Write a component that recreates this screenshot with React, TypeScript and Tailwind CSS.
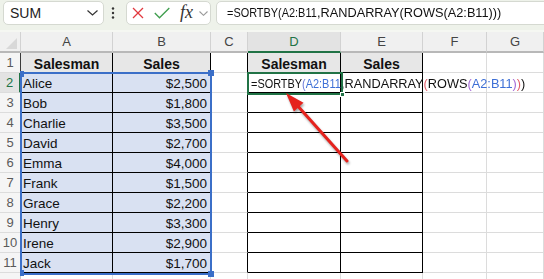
import React from "react";

const data: [string, string][] = [
  ["Alice", "$2,500"],
  ["Bob", "$1,800"],
  ["Charlie", "$3,500"],
  ["David", "$2,700"],
  ["Emma", "$4,000"],
  ["Frank", "$1,500"],
  ["Grace", "$2,200"],
  ["Henry", "$3,300"],
  ["Irene", "$2,900"],
  ["Jack", "$1,700"],
];

const colKeys = ["A", "B", "C", "D", "E", "F", "G"];

function Formula({ colored }: { colored: boolean }) {
  const blue = colored ? "text-[#3d6fd6]" : "";
  const p1 = colored ? "text-[#6a78d8]" : "";
  const p2 = colored ? "text-[#e2606c]" : "";
  const p3 = colored ? "text-[#a56ad6]" : "";
  return (
    <span className="inline-flex whitespace-nowrap text-[13px] text-[#111]">
      <span className="inline-block w-[90px] whitespace-nowrap">
        <span className="inline-block origin-left scale-x-[0.84]">
          =SORTBY<span className={p1}>(</span>
          <span className={blue}>A2:B11</span>
        </span>
      </span>
      <span className="inline-block origin-left scale-x-[0.98] whitespace-nowrap">
        ,RANDARRAY<span className={p2}>(</span>ROWS
        <span className={p3}>(</span>
        <span className={blue}>A2:B11</span>
        <span className={p3}>)</span>
        <span className={p2}>)</span>)
      </span>
    </span>
  );
}

function TopBar() {
  return (
    <>
      <div className="h-[30px] bg-[#eef2ea] flex items-start pt-px">
        <div className="ml-[3px] w-[101px] h-[24px] bg-white border border-[#d5d9d1] rounded-[5px] flex items-center justify-between pl-[6px] pr-[4px]">
          <span className="text-[14px] text-[#222]">SUM</span>
          <svg width="11" height="6" viewBox="0 0 11 6" className="mr-[1px]">
            <polyline points="0.5,0.5 5.5,5 10.5,0.5" fill="none" stroke="#333" strokeWidth="1.2" />
          </svg>
        </div>
        <div className="w-[22px] h-[24px] flex items-center justify-center">
          <svg width="4" height="12" viewBox="0 0 4 12" className="-ml-[5px]">
            <circle cx="2" cy="1.5" r="1.2" fill="#333" />
            <circle cx="2" cy="6" r="1.2" fill="#333" />
            <circle cx="2" cy="10.5" r="1.2" fill="#333" />
          </svg>
        </div>
        <div className="w-[85px] h-[24px] bg-white border border-[#d5d9d1] rounded-[5px] flex items-center">
          <svg width="12" height="12" viewBox="0 0 12 12" className="ml-[5px]">
            <line x1="1" y1="1" x2="11" y2="11" stroke="#e2393f" strokeWidth="1.3" />
            <line x1="11" y1="1" x2="1" y2="11" stroke="#e2393f" strokeWidth="1.3" />
          </svg>
          <svg width="16" height="12" viewBox="0 0 16 12" className="ml-[10px]">
            <polyline points="0.8,6 5.5,10.8 15.3,1" fill="none" stroke="#3f9e4e" strokeWidth="1.3" />
          </svg>
          <span className="ml-[10px] w-[18px] font-['Liberation_Serif',serif] italic text-[18px] leading-none text-[#333] -mt-[2px]">
            fx
          </span>
          <svg width="9" height="5" viewBox="0 0 9 5" className="ml-[1px] mt-[1px]">
            <polyline points="0.5,0.5 4.5,4.3 8.5,0.5" fill="none" stroke="#9a9a9a" strokeWidth="1.1" />
          </svg>
        </div>
        <div className="ml-[5px] flex-1 -mr-[8px] h-[24px] bg-white border border-[#d5d9d1] rounded-[5px] flex items-center pl-[10px]">
          <Formula colored={false} />
        </div>
      </div>
      <div className="h-[2px] bg-[#f5f7f2]" />
    </>
  );
}

function HeaderRow() {
  return (
    <>
      <div className="h-[21px] bg-[#f0f0f0] border-r border-r-[#d2d2d2] border-b-2 border-b-[#b8b8b8] relative">
        <svg width="21" height="19" viewBox="0 0 21 19" className="absolute left-0 top-0">
          <polygon points="17,6 17,17 6,17" fill="#d8d8d8" />
        </svg>
      </div>
      {colKeys.map((k) => (
        <div
          key={k}
          className={
            k === "D"
              ? "h-[21px] bg-[#e3e3e3] border-r border-r-[#d2d2d2] border-b-2 border-b-[#217346] flex items-center justify-center text-[13px] text-[#217346]"
              : "h-[21px] bg-[#f0f0f0] border-r border-r-[#d2d2d2] border-b-2 border-b-[#b8b8b8] flex items-center justify-center text-[13px] text-[#444]"
          }
        >
          {k}
        </div>
      ))}
    </>
  );
}

function DataRow({ r }: { r: number }) {
  const inTable = r >= 1 && r <= 11;
  const rhRight =
    r === 2
      ? "border-r-2 border-r-[#217346] bg-[#e3e3e3] text-[#217346]"
      : inTable
      ? "border-r border-r-[#3a3a3a] bg-[#f5f5f5] text-[#5a5a5a]"
      : "border-r border-r-[#c8c8c8] bg-[#f5f5f5] text-[#5a5a5a]";
  const tbl = "border-r border-b border-r-black border-b-black";
  const gray = "border-r border-b border-r-[#dcdcdc] border-b-[#dcdcdc]";
  const cCls = inTable
    ? "border-r border-b border-r-black border-b-[#dcdcdc]"
    : gray;
  const hdrFill = "bg-[#e7e7e7]";
  const selFill = "bg-[#d9e1f2]";
  const item = r >= 2 && r <= 11 ? data[r - 2] : null;

  return (
    <>
      <div
        className={`h-[20px] flex items-center justify-center text-[13px] border-b border-b-[#dcdcdc] ${rhRight}`}
      >
        {r <= 11 ? r : ""}
      </div>
      {/* A */}
      <div
        className={`h-[20px] overflow-visible text-[13.5px] leading-[22px] text-[#111] ${inTable ? tbl : gray} ${
          r === 1 ? hdrFill : item ? selFill : "bg-white"
        } ${r === 1 ? "text-center font-bold text-[14px]" : "pl-[2px]"}`}
      >
        {r === 1 ? "Salesman" : item ? item[0] : ""}
      </div>
      {/* B */}
      <div
        className={`h-[20px] text-[13.5px] leading-[22px] text-[#111] ${inTable ? tbl : gray} ${
          r === 1 ? hdrFill : item ? selFill : "bg-white"
        } ${r === 1 ? "text-center font-bold text-[14px]" : "text-right pr-[3px]"}`}
      >
        {r === 1 ? "Sales" : item ? item[1] : ""}
      </div>
      {/* C */}
      <div className={`h-[20px] bg-white ${cCls}`} />
      {/* D */}
      <div
        className={`h-[20px] text-[13.5px] leading-[22px] text-[#111] overflow-visible ${inTable ? tbl : gray} ${
          r === 1 ? hdrFill : "bg-white"
        } ${r === 1 ? "text-center font-bold text-[14px]" : "pl-[3px]"} ${r === 2 ? "relative z-10" : ""}`}
      >
        {r === 1 ? (
          "Salesman"
        ) : r === 2 ? (
          <span className="block w-[300px] whitespace-nowrap">
            <Formula colored={true} />
          </span>
        ) : (
          ""
        )}
      </div>
      {/* E */}
      <div
        className={`h-[20px] text-[13.5px] leading-[22px] text-[#111] ${inTable ? tbl : gray} ${
          r === 1 ? hdrFill : "bg-white"
        } ${r === 1 ? "text-center font-bold text-[14px]" : ""}`}
      >
        {r === 1 ? "Sales" : ""}
      </div>
      {/* F */}
      <div className={`h-[20px] bg-white ${gray}`} />
      {/* G */}
      <div className={`h-[20px] bg-white ${gray}`} />
    </>
  );
}

export default function App() {
  const rows = [1, 2, 3, 4, 5, 6, 7, 8, 9, 10, 11, 12];
  return (
    <div className="relative w-[544px] h-[279px] overflow-hidden bg-white font-['Liberation_Sans',Arial,sans-serif]">
      <TopBar />
      <div className="grid grid-cols-[21px_92px_98px_37px_93px_82px_64px_57px]">
        <HeaderRow />
        {rows.map((r) => (
          <DataRow key={r} r={r} />
        ))}
      </div>

      {/* selection range A2:B11 */}
      <div className="absolute left-[20px] top-[72px] w-[192px] h-[203px] border-2 border-[#3b6fc8] z-20 pointer-events-none">
        <div className="absolute -left-[2px] -top-[3px] w-[4px] h-[6px] bg-[#3b6fc8]" />
        <div className="absolute -right-[4px] -top-[4px] w-[6px] h-[6px] bg-[#3b6fc8]" />
        <div className="absolute -right-[4px] -bottom-[4px] w-[6px] h-[6px] bg-[#3b6fc8]" />
        <div className="absolute -left-[2px] -bottom-[3px] w-[4px] h-[6px] bg-[#3b6fc8]" />
      </div>

      {/* active cell D2 */}
      <div className="absolute left-[247px] top-[72px] w-[96px] h-[23px] border-2 border-[#217346] z-20 pointer-events-none">
        <div className="absolute -right-[4px] -bottom-[4px] w-[5px] h-[5px] bg-[#217346] border border-white" />
      </div>

      {/* red arrow */}
      <svg
        width="544"
        height="279"
        viewBox="0 0 544 279"
        className="absolute left-0 top-0 z-30 pointer-events-none drop-shadow-[1px_2px_1px_rgba(0,0,0,0.35)]"
      >
        <line x1="347" y1="161" x2="296" y2="104" stroke="#e5221d" strokeWidth="3" strokeLinecap="round" />
        <polygon points="286,93 303.5,102.8 293.9,111.4" fill="#e5221d" />
      </svg>
    </div>
  );
}
